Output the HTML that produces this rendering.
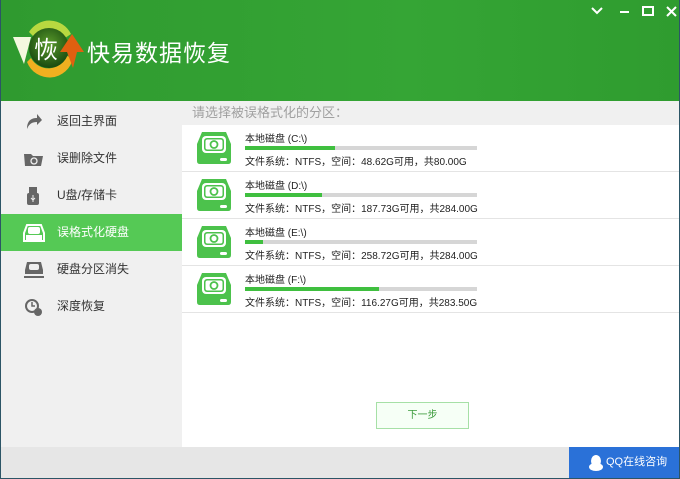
<!DOCTYPE html>
<html><head><meta charset="utf-8"><style>
*{margin:0;padding:0;box-sizing:border-box}
body{width:680px;height:479px;overflow:hidden;font-family:"Liberation Sans","Noto Sans CJK SC",sans-serif;background:#2c5566;position:relative}
.win{position:absolute;left:1px;top:0;width:678px;height:478px;background:#fff}
.hd{position:absolute;left:0;top:0;width:678px;height:101px;background:linear-gradient(90deg,#2f9a2f,#35a535 60%,#2f9c2f)}
.title{position:absolute;left:86px;top:34px;color:#fff;font-size:23px;letter-spacing:1px}
.side{position:absolute;left:0;top:101px;width:181px;height:346px;background:#f0f0f0}
.it{position:absolute;left:0;width:181px;height:37px;font-size:12px;color:#333;line-height:37px;padding-left:56px}
.it.on{background:#55c955;color:#fff}
.it svg{position:absolute;left:22px;top:9px}
.ct{position:absolute;left:181px;top:101px;width:497px;height:346px;background:#fff}
.cap{height:24px;background:#f0f0f0;color:#a0a0a0;font-size:13px;line-height:24px;padding-left:10px}
.row{position:absolute;left:0;width:497px;height:47px;border-bottom:1px solid #e4e4e4}
.row svg{position:absolute;left:14px;top:6px}
.nm{position:absolute;left:63px;top:5px;font-size:10px;color:#222}
.bar{position:absolute;left:63px;top:21px;width:232px;height:4px;background:#d6d6d6}
.bar i{display:block;height:4px;background:#3fbf3f}
.inf{position:absolute;left:63px;top:28px;font-size:10px;color:#222}
.btn{position:absolute;left:194px;top:301px;width:93px;height:27px;border:1px solid #a6e0a6;background:#f6fff6;color:#3a9a3a;font-size:10px;text-align:center;line-height:25px}
.ft{position:absolute;left:0;top:447px;width:678px;height:31px;background:#e6e6e6}
.qq{position:absolute;left:568px;top:0;width:110px;height:31px;background:#2a71d8;color:#fff;font-size:11px;line-height:31px;padding-left:37px}
</style></head><body>
<div class="win">
<div class="hd">
<svg width="80" height="70" viewBox="0 0 80 70" style="position:absolute;left:8px;top:12px">
<defs><radialGradient id="g" cx="50%" cy="40%" r="60%"><stop offset="0" stop-color="#5a9a2a"/><stop offset="1" stop-color="#184a10"/></radialGradient></defs>
<path d="M20 20 A24 24 0 0 1 62 22 L56 26 A20 20 0 0 0 24 24Z" fill="#b8d840"/>
<path d="M18 50 A24 24 0 0 0 64 46 L58 44 A20 20 0 0 1 22 46Z" fill="#f0b020"/>
<circle cx="40" cy="36" r="20" fill="url(#g)"/>
<path d="M4 25 L22 25 L15 52 Z" fill="#f4f8e0"/>
<path d="M63 22 L75 40 L68 40 L64 56 L58 40 L51 40 Z" fill="#e06010"/>
<text x="25" y="46" font-size="24" fill="#fff" font-family="Noto Sans CJK SC">恢</text>
</svg>
<div class="title">快易数据恢复</div>
<svg width="90" height="14" style="position:absolute;left:588px;top:5px" stroke="#fff" stroke-width="2" fill="none">
<path d="M3 3 L8 8 L13 3"/><path d="M31 7 L40 7"/><rect x="54" y="2" width="10" height="8"/><path d="M78 2 L87 11 M87 2 L78 11"/>
</svg>
</div>
<div class="side">
<div class="it" style="top:2px"><svg width="20" height="20"><path d="M4 17 C4 9 8 6 14 6 L14 2 L19 8 L14 13 L14 10 C9 10 6 12 4 17Z" fill="#666"/></svg>返回主界面</div>
<div class="it" style="top:39px"><svg width="22" height="20"><path d="M1 5 L8 5 L10 7 L20 7 L18 17 L2 17Z" fill="#666"/><circle cx="11" cy="12" r="3" stroke="#f0f0f0" fill="none" stroke-width="1.3"/></svg>误删除文件</div>
<div class="it" style="top:76px"><svg width="20" height="20"><rect x="6" y="1" width="8" height="6" fill="#666"/><rect x="4" y="7" width="12" height="12" rx="2" fill="#666"/><path d="M10 9 V16 M8 12 L10 14 L12 12" stroke="#f0f0f0" fill="none"/></svg>U盘/存储卡</div>
<div class="it on" style="top:113px"><svg width="22" height="20"><path d="M4 2 H18 L21 10 V18 H1 V10Z" fill="none" stroke="#fff" stroke-width="2"/><rect x="5" y="4" width="12" height="7" rx="2" fill="#fff"/><rect x="3" y="12" width="16" height="5" fill="#fff"/></svg>误格式化硬盘</div>
<div class="it" style="top:150px"><svg width="22" height="20"><path d="M4 2 H18 L20 10 V14 H2 V10Z" fill="#666"/><rect x="6" y="4" width="10" height="6" rx="2" fill="#f0f0f0"/><rect x="1" y="16" width="20" height="2" fill="#666"/></svg>硬盘分区消失</div>
<div class="it" style="top:187px"><svg width="22" height="20"><circle cx="9" cy="9" r="6" fill="none" stroke="#666" stroke-width="2"/><path d="M9 5 V9 H12" stroke="#666" fill="none" stroke-width="1.5"/><circle cx="15" cy="15" r="4" fill="#666"/></svg>深度恢复</div>
</div>
<div class="ct">
<div class="cap">请选择被误格式化的分区：</div>
<div class="row" style="top:24px"><svg width="36" height="34" viewBox="0 0 36 34"><path d="M6 1 H30 L35 13 V30 Q35 33 32 33 H4 Q1 33 1 30 V13Z" fill="#4cc24c"/><rect x="6" y="5" width="24" height="17" rx="4" fill="#fff"/><rect x="8" y="7" width="20" height="13" rx="3" fill="#4cc24c"/><rect x="9.5" y="8.5" width="17" height="10" rx="2" fill="#fff"/><circle cx="18" cy="13.5" r="3.5" fill="none" stroke="#4cc24c" stroke-width="1.8"/><rect x="24" y="27" width="7" height="3" rx="1.5" fill="#fff"/></svg><div class="nm">本地磁盘 (C:\)</div><div class="bar"><i style="width:90px"></i></div><div class="inf">文件系统：NTFS，空间：48.62G可用，共80.00G</div></div>
<div class="row" style="top:71px"><svg width="36" height="34" viewBox="0 0 36 34"><path d="M6 1 H30 L35 13 V30 Q35 33 32 33 H4 Q1 33 1 30 V13Z" fill="#4cc24c"/><rect x="6" y="5" width="24" height="17" rx="4" fill="#fff"/><rect x="8" y="7" width="20" height="13" rx="3" fill="#4cc24c"/><rect x="9.5" y="8.5" width="17" height="10" rx="2" fill="#fff"/><circle cx="18" cy="13.5" r="3.5" fill="none" stroke="#4cc24c" stroke-width="1.8"/><rect x="24" y="27" width="7" height="3" rx="1.5" fill="#fff"/></svg><div class="nm">本地磁盘 (D:\)</div><div class="bar"><i style="width:77px"></i></div><div class="inf">文件系统：NTFS，空间：187.73G可用，共284.00G</div></div>
<div class="row" style="top:118px"><svg width="36" height="34" viewBox="0 0 36 34"><path d="M6 1 H30 L35 13 V30 Q35 33 32 33 H4 Q1 33 1 30 V13Z" fill="#4cc24c"/><rect x="6" y="5" width="24" height="17" rx="4" fill="#fff"/><rect x="8" y="7" width="20" height="13" rx="3" fill="#4cc24c"/><rect x="9.5" y="8.5" width="17" height="10" rx="2" fill="#fff"/><circle cx="18" cy="13.5" r="3.5" fill="none" stroke="#4cc24c" stroke-width="1.8"/><rect x="24" y="27" width="7" height="3" rx="1.5" fill="#fff"/></svg><div class="nm">本地磁盘 (E:\)</div><div class="bar"><i style="width:18px"></i></div><div class="inf">文件系统：NTFS，空间：258.72G可用，共284.00G</div></div>
<div class="row" style="top:165px"><svg width="36" height="34" viewBox="0 0 36 34"><path d="M6 1 H30 L35 13 V30 Q35 33 32 33 H4 Q1 33 1 30 V13Z" fill="#4cc24c"/><rect x="6" y="5" width="24" height="17" rx="4" fill="#fff"/><rect x="8" y="7" width="20" height="13" rx="3" fill="#4cc24c"/><rect x="9.5" y="8.5" width="17" height="10" rx="2" fill="#fff"/><circle cx="18" cy="13.5" r="3.5" fill="none" stroke="#4cc24c" stroke-width="1.8"/><rect x="24" y="27" width="7" height="3" rx="1.5" fill="#fff"/></svg><div class="nm">本地磁盘 (F:\)</div><div class="bar"><i style="width:134px"></i></div><div class="inf">文件系统：NTFS，空间：116.27G可用，共283.50G</div></div>
<div class="btn">下一步</div>
</div>
<div class="ft"><div class="qq"><svg width="14" height="16" style="position:absolute;left:20px;top:8px"><ellipse cx="7" cy="6" rx="5" ry="6" fill="#fff"/><ellipse cx="7" cy="12" rx="7" ry="4" fill="#fff"/></svg>QQ在线咨询</div></div>
</div>
</body></html>
